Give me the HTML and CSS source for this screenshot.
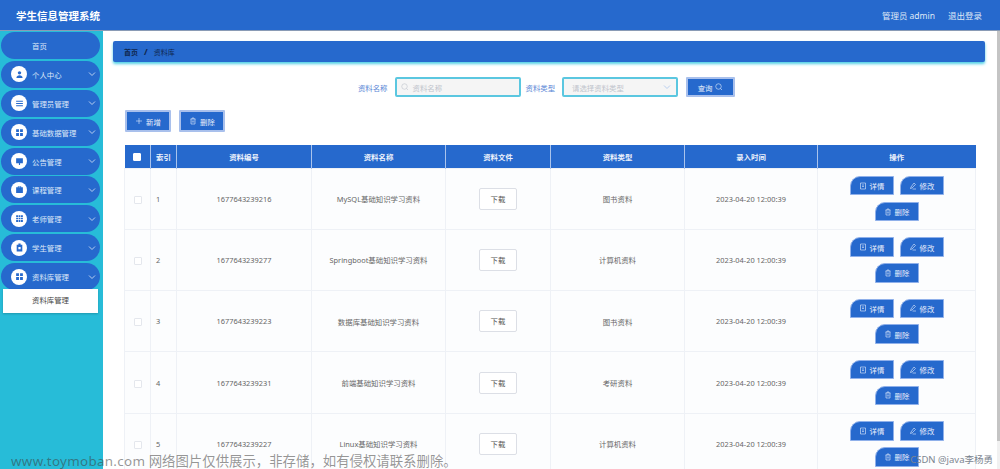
FILE: index.html
```html
<!DOCTYPE html>
<html lang="zh-CN">
<head>
    <meta charset="UTF-8">
    <title>学生信息管理系统</title>
    <link rel="stylesheet" href="styles.css">
</head>
<body>
<svg class="defs" width="0" height="0">
    <symbol id="i-search" viewBox="0 0 16 16"><circle cx="7" cy="7" r="5.500" fill="none" stroke="currentColor" stroke-width="1.200"/><path d="M11 11l3 3" stroke="currentColor" stroke-width="1.200"/></symbol>
    <symbol id="i-plus" viewBox="0 0 16 16"><path d="M8 2v12M2 8h12" stroke="currentColor" stroke-width="1.200"/></symbol>
    <symbol id="i-trash" viewBox="0 0 16 16"><path d="M3 4h10M6 4V2h4v2M4 4v10h8V4M6.500 7v4M9.500 7v4" fill="none" stroke="currentColor" stroke-width="1.200"/></symbol>
    <symbol id="i-doc" viewBox="0 0 16 16"><path d="M3 2h10v12H3zM6 6h4M6 9h4" fill="none" stroke="currentColor" stroke-width="1.200"/></symbol>
    <symbol id="i-edit" viewBox="0 0 16 16"><path d="M10 2l3 3-7 7-3 1 1-3zM7 14h7" fill="none" stroke="currentColor" stroke-width="1.200"/></symbol>
    <symbol id="i-chev" viewBox="0 0 10 10"><path d="M2 3.500l3 3 3-3" fill="none" stroke="currentColor" stroke-width="1"/></symbol>
    <symbol id="i-user" viewBox="0 0 16 16"><circle cx="8" cy="5" r="3"/><path d="M2.500 14c0-6 11-6 11 0z"/></symbol>
    <symbol id="i-list" viewBox="0 0 16 16"><path d="M2 3h12v2H2zM2 7h12v2H2zM2 11h12v2H2z"/></symbol>
    <symbol id="i-apps" viewBox="0 0 16 16"><path d="M2 2h5v5H2zM9 2h5v5H9zM2 9h5v5H2zM9 9h5v5H9z"/></symbol>
    <symbol id="i-chat" viewBox="0 0 16 16"><path d="M2 2h12v9H9v3H7v-3H2z"/></symbol>
    <symbol id="i-case" viewBox="0 0 16 16"><path d="M5 4V2h6v2h3v10H2V4zM6.500 4h3V3h-3z"/></symbol>
    <symbol id="i-grid" viewBox="0 0 16 16"><path d="M2 2h3.500v3.500H2zM6.500 2h3v3.500h-3zM10.500 2H14v3.500h-3.500zM2 6.500h3.500v3H2zM6.500 6.500h3v3h-3zM10.500 6.500H14v3h-3.500zM2 10.500h3.500V14H2zM6.500 10.500h3V14h-3zM10.500 10.500H14V14h-3.500z"/></symbol>
    <symbol id="i-clip" viewBox="0 0 16 16"><path d="M3 3h3V1h4v2h3v12H3zM6 7v4h4V7z"/></symbol>
</svg>

<header class="topbar">
    <div class="brand">学生信息管理系统</div>
    <div class="userbox">
        <span>管理员 admin</span>
        <span>退出登录</span>
    </div>
</header>

<div class="layout">
    <aside class="sidebar">
        <div class="nav-item nav-home">首页</div>
        <div class="nav-item"><span class="nav-icon"><svg><use href="#i-user"/></svg></span><span class="nav-text">个人中心</span><svg class="chev"><use href="#i-chev"/></svg></div>
        <div class="nav-item"><span class="nav-icon"><svg><use href="#i-list"/></svg></span><span class="nav-text">管理员管理</span><svg class="chev"><use href="#i-chev"/></svg></div>
        <div class="nav-item"><span class="nav-icon"><svg><use href="#i-apps"/></svg></span><span class="nav-text">基础数据管理</span><svg class="chev"><use href="#i-chev"/></svg></div>
        <div class="nav-item"><span class="nav-icon"><svg><use href="#i-chat"/></svg></span><span class="nav-text">公告管理</span><svg class="chev"><use href="#i-chev"/></svg></div>
        <div class="nav-item"><span class="nav-icon"><svg><use href="#i-case"/></svg></span><span class="nav-text">课程管理</span><svg class="chev"><use href="#i-chev"/></svg></div>
        <div class="nav-item"><span class="nav-icon"><svg><use href="#i-grid"/></svg></span><span class="nav-text">老师管理</span><svg class="chev"><use href="#i-chev"/></svg></div>
        <div class="nav-item"><span class="nav-icon"><svg><use href="#i-clip"/></svg></span><span class="nav-text">学生管理</span><svg class="chev"><use href="#i-chev"/></svg></div>
        <div class="nav-item"><span class="nav-icon"><svg><use href="#i-apps"/></svg></span><span class="nav-text">资料库管理</span><svg class="chev"><use href="#i-chev"/></svg></div>
        <div class="nav-sub">资料库管理</div>
    </aside>

    <main class="content">
        <div class="crumb"><b>首页</b><i>/</i><span>资料库</span></div>

        <form class="search">
            <label>资料名称</label>
            <div class="field field-name"><svg class="ic-search"><use href="#i-search"/></svg><span>资料名称</span></div>
            <label>资料类型</label>
            <div class="field field-type"><span>请选择资料类型</span><svg class="chev"><use href="#i-chev"/></svg></div>
            <div class="btn btn-search">查询<svg><use href="#i-search"/></svg></div>
        </form>

        <div class="tools">
            <div class="btn btn-tool"><svg><use href="#i-plus"/></svg>新增</div>
            <div class="btn btn-tool"><svg><use href="#i-trash"/></svg>删除</div>
        </div>

        <table class="grid">
            <colgroup>
                <col class="c1"><col class="c2"><col class="c3"><col class="c4"><col class="c5"><col class="c6"><col class="c7"><col class="c8">
            </colgroup>
            <thead>
                <tr><th><span class="check check-head"></span></th><th>索引</th><th>资料编号</th><th>资料名称</th><th>资料文件</th><th>资料类型</th><th>录入时间</th><th>操作</th></tr>
            </thead>
            <tbody>
                <tr>
                    <td><span class="check"></span></td><td class="idx">1</td><td>1677643239216</td><td>MySQL基础知识学习资料</td>
                    <td><span class="down">下载</span></td><td>图书资料</td><td>2023-04-20 12:00:39</td>
                    <td class="ops"><span class="op"><svg><use href="#i-doc"/></svg>详情</span><span class="op"><svg><use href="#i-edit"/></svg>修改</span><span class="op"><svg><use href="#i-trash"/></svg>删除</span></td>
                </tr>
                <tr>
                    <td><span class="check"></span></td><td class="idx">2</td><td>1677643239277</td><td>Springboot基础知识学习资料</td>
                    <td><span class="down">下载</span></td><td>计算机资料</td><td>2023-04-20 12:00:39</td>
                    <td class="ops"><span class="op"><svg><use href="#i-doc"/></svg>详情</span><span class="op"><svg><use href="#i-edit"/></svg>修改</span><span class="op"><svg><use href="#i-trash"/></svg>删除</span></td>
                </tr>
                <tr>
                    <td><span class="check"></span></td><td class="idx">3</td><td>1677643239223</td><td>数据库基础知识学习资料</td>
                    <td><span class="down">下载</span></td><td>图书资料</td><td>2023-04-20 12:00:39</td>
                    <td class="ops"><span class="op"><svg><use href="#i-doc"/></svg>详情</span><span class="op"><svg><use href="#i-edit"/></svg>修改</span><span class="op"><svg><use href="#i-trash"/></svg>删除</span></td>
                </tr>
                <tr>
                    <td><span class="check"></span></td><td class="idx">4</td><td>1677643239231</td><td>前端基础知识学习资料</td>
                    <td><span class="down">下载</span></td><td>考研资料</td><td>2023-04-20 12:00:39</td>
                    <td class="ops"><span class="op"><svg><use href="#i-doc"/></svg>详情</span><span class="op"><svg><use href="#i-edit"/></svg>修改</span><span class="op"><svg><use href="#i-trash"/></svg>删除</span></td>
                </tr>
                <tr>
                    <td><span class="check"></span></td><td class="idx">5</td><td>1677643239227</td><td>Linux基础知识学习资料</td>
                    <td><span class="down">下载</span></td><td>计算机资料</td><td>2023-04-20 12:00:39</td>
                    <td class="ops"><span class="op"><svg><use href="#i-doc"/></svg>详情</span><span class="op"><svg><use href="#i-edit"/></svg>修改</span><span class="op"><svg><use href="#i-trash"/></svg>删除</span></td>
                </tr>
            </tbody>
        </table>
    </main>
    <div class="scrollbar"><div class="scroll-thumb"></div></div>
</div>

<div class="mark-left"><span class="mark-url">www.toymoban.com</span> 网络图片仅供展示，非存储，如有侵权请联系删除。</div>
<div class="mark-right">CSDN @java李杨勇</div>
</body>
</html>
```

FILE: styles.css
```css
*{
    margin: 0;
    padding: 0;
    box-sizing: border-box;
}
html,body{
    height: 469px;
    overflow: hidden;
}
body{
    position: relative;
    background: #fff;
    font-family: "Noto Sans", "Noto Sans CJK SC", sans-serif;
    font-size: 7.4px;
    color: #606266;
}
.defs{
    position: absolute;
}

/* top */
.topbar{
    height: 31px;
    padding: 0 18px 0 16px;
    display: flex;
    align-items: center;
    justify-content: space-between;
    background: #2669cd;
    border-bottom: 1px solid #8a9bb5;
    color: #fff;
}
.brand{
    font-size: 10.5px;
    font-weight: bold;
}
.userbox{
    display: flex;
    gap: 13px;
    font-size: 8.5px;
    color: #dfe8f7;
}

.layout{
    display: flex;
    height: 438px;
}

/* left menu */
.sidebar{
    width: 103px;
    flex: none;
    padding: 1px 3px 0 1px;
    background: #27bcd8;
}
.nav-item{
    height: 27px;
    margin-bottom: 1.9px;
    padding: 0 3px 0 10px;
    display: flex;
    align-items: center;
    border-radius: 14px;
    background: #2669cd;
    color: #dde8f8;
}
.nav-home{
    padding-left: 31px;
}
.nav-icon{
    width: 16px;
    height: 16px;
    margin-right: 5px;
    display: flex;
    align-items: center;
    justify-content: center;
    border-radius: 50%;
    background: #fff;
    color: #2669cd;
}
.nav-icon svg{
    width: 9px;
    height: 9px;
    fill: currentColor;
}
.nav-text{
    flex: 1;
}
.chev{
    width: 10px;
    height: 10px;
    color: #b9cff0;
}
.nav-sub{
    height: 23.5px;
    margin: -2.900px 2px 0 2px;
    padding-left: 29px;
    line-height: 23px;
    background: #fff;
    color: #444;
    box-shadow: 0 1px 2px rgba(0,0,0,.2);
    position: relative;
}

/* right part */
.content{
    flex: 1;
    padding: 10px 0 0 10px;
    min-width: 0;
}
.crumb{
    width: 872px;
    height: 21px;
    padding-left: 11px;
    display: flex;
    align-items: center;
    gap: 6px;
    border-radius: 2px;
    background: #2669cd;
    box-shadow: 0 2px 3px #4fd0e6;
    font-size: 7px;
    color: #10274d;
}
.crumb i{
    font-style: normal;
    font-weight: bold;
    font-size: 9px;
}
.search{
    height: 20px;
    margin-top: 15px;
    display: flex;
    align-items: center;
    justify-content: center;
    width: 872px;
    padding-right: 5px;
    color: #5a86d6;
}
.search label{
    margin-right: 7px;
}
.field{
    height: 20px;
    margin-right: 5px;
    padding: 0 4px;
    display: flex;
    align-items: center;
    border: 2px solid #5bc7e0;
    border-radius: 2px;
    background: #f5f5f5;
    color: #c0c4cc;
}
.field-name{
    width: 126px;
}
.ic-search{
    width: 8px;
    height: 8px;
    margin-right: 4px;
}
.field-type{
    width: 116px;
    padding-left: 8px;
    justify-content: space-between;
}
.btn{
    display: flex;
    align-items: center;
    justify-content: center;
    gap: 3px;
    background: #2669cd;
    border: 2px solid #a9c0ec;
    color: #e6eefb;
    border-radius: 1px;
}
.btn svg{
    width: 8px;
    height: 8px;
}
.btn-search{
    width: 49px;
    height: 20px;
    margin-left: 3px;
}
.tools{
    margin: 13px 0 0 12px;
    display: flex;
    gap: 8px;
}
.btn-tool{
    width: 46px;
    height: 22px;
}

.grid{
    width: 851px;
    margin: 13px 0 0 11px;
    table-layout: fixed;
    border-collapse: collapse;
}
.c1,.c2{ width: 26px; }
.c3{ width: 135px; }
.c4{ width: 134px; }
.c5{ width: 105px; }
.c6{ width: 134px; }
.c7{ width: 133px; }
.c8{ width: 158px; }
.grid th{
    height: 23px;
    background: #2669cd;
    border-right: 1px solid #a9c3ec;
    color: #eef3fc;
    font-weight: bold;
    text-align: center;
}
.grid th:last-child{
    border-right: 0;
}
.grid td{
    height: 61.3px;
    background: #fcfdfe;
    border: 1px solid #eef1f6;
    text-align: center;
    color: #666;
}
.grid td.idx{
    text-align: left;
    padding-left: 5px;
}
.check{
    display: inline-block;
    width: 8px;
    height: 8px;
    vertical-align: middle;
    border: 1px solid #e4e7ed;
    border-radius: 1px;
    background: #fff;
}
.check-head{
    border-color: #fff;
}
.down{
    display: inline-block;
    width: 38px;
    height: 22px;
    line-height: 20px;
    border: 1px solid #dcdfe6;
    border-radius: 2px;
    background: #fff;
    color: #555;
}
.grid td.ops{
    padding: 0 15px;
    font-size: 0;
}
.op{
    display: inline-flex;
    align-items: center;
    justify-content: center;
    gap: 3px;
    width: 44px;
    height: 19.5px;
    margin: 3.200px 3px;
    background: #2669cd;
    border: 1px solid #8fb0ea;
    border-radius: 10px 0 0 0;
    color: #e6eefb;
    font-size: 7.4px;
    vertical-align: top;
}
.op svg{
    width: 8px;
    height: 8px;
}

.scrollbar{
    position: absolute;
    top: 31px;
    right: 0;
    width: 3px;
    height: 438px;
    background: #f1f1f1;
}
.scroll-thumb{
    height: 410px;
    background: #c4c4c4;
}

/* watermark */
.mark-left{
    position: absolute;
    left: 11px;
    top: 450px;
    font-size: 13.4px;
    color: rgba(60,60,60,.55);
    white-space: nowrap;
}
.mark-url{
    letter-spacing: .3px;
}
.mark-right{
    position: absolute;
    right: 7px;
    top: 452px;
    font-size: 9.5px;
    color: #7d8590;
    white-space: nowrap;
}
```
